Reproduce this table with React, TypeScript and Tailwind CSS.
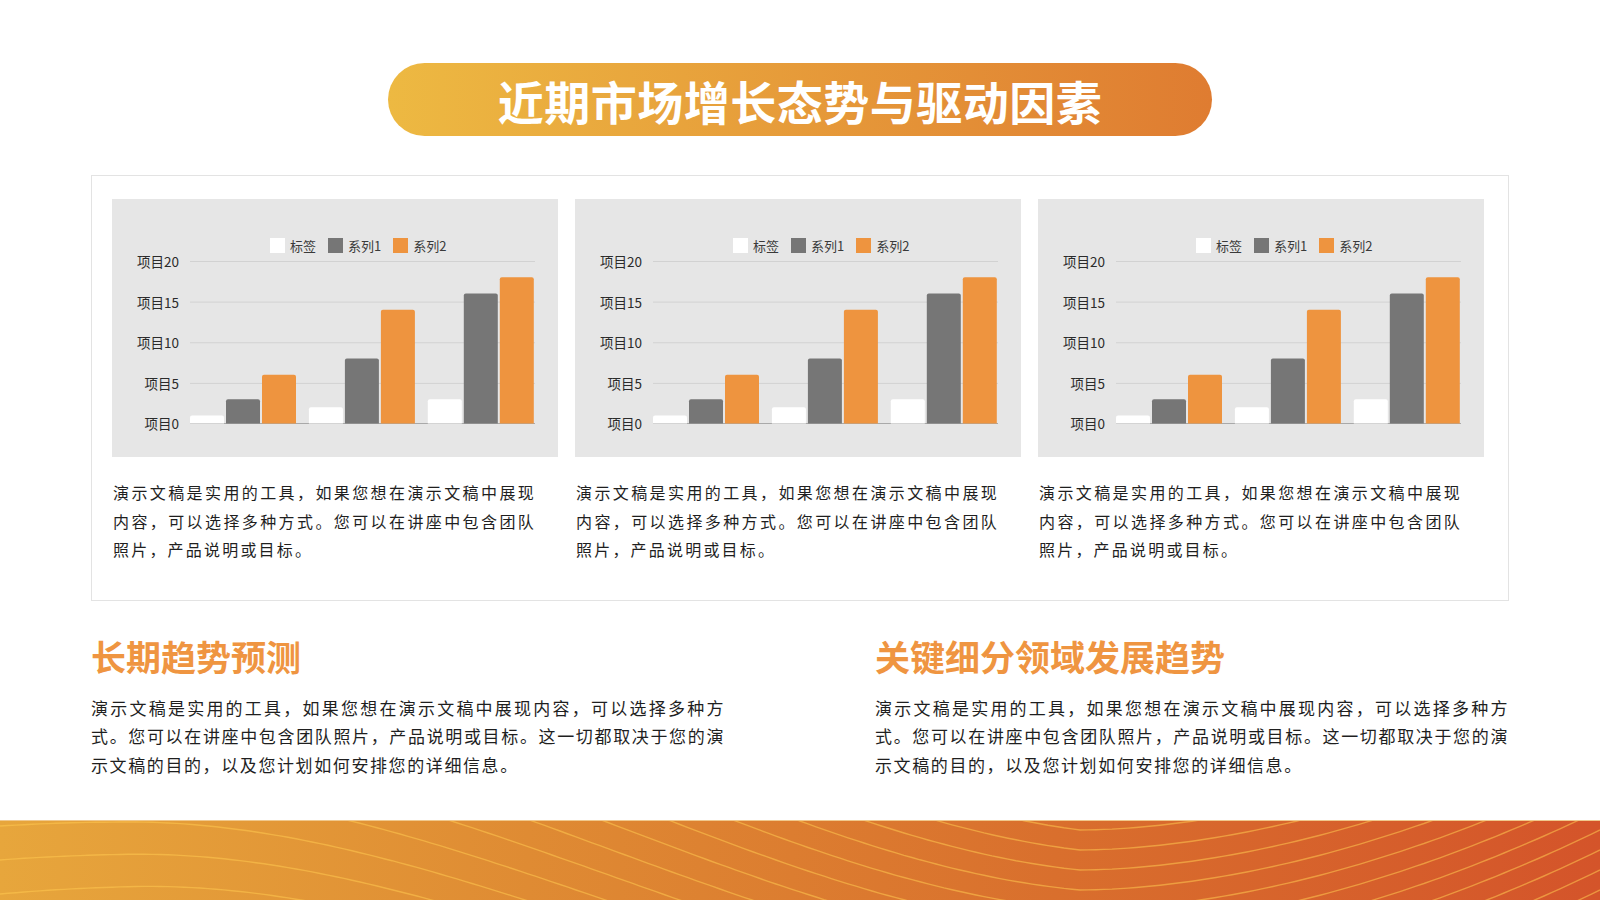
const groups = [
  { white: 1, gray: 3, orange: 6 },
  { white: 2, gray: 8, orange: 14 },
  { white: 3, gray: 16, orange: 18 },
];

const UNIT = 162.5 / 20;

function bar(x: number, w: number, v: number) {
  const base = 162.5;
  const h = v * UNIT;
  const r = 2;
  const top = base - h;
  return `M${x} ${base} V${top + r} Q${x} ${top} ${x + r} ${top} H${x + w - r} Q${x + w} ${top} ${x + w} ${top + r} V${base} Z`;
}

function Chart() {
  return (
    <div className="w-[446px] h-[258px] bg-[#e6e6e6] flex flex-col pt-[39px]">
      <div className="flex items-center h-[15px] pl-[158px] gap-[12px] text-[13px] leading-none text-[#3a3a3a]">
        <span className="flex items-center gap-[5px]">
          <span className="w-[15px] h-[15px] bg-white" />
          标签
        </span>
        <span className="flex items-center gap-[5px]">
          <span className="w-[15px] h-[15px] bg-[#767676]" />
          系列1
        </span>
        <span className="flex items-center gap-[5px]">
          <span className="w-[15px] h-[15px] bg-[#ee943f]" />
          系列2
        </span>
      </div>
      <div className="flex pl-[24px]">
        <div className="w-[43px] h-[178px] flex flex-col justify-between items-end text-[13.5px] leading-[16px] text-[#2b2b2b]">
          <span>项目20</span>
          <span>项目15</span>
          <span>项目10</span>
          <span>项目5</span>
          <span>项目0</span>
        </div>
        <svg className="ml-[11px] mt-[8px] overflow-visible" width="345" height="163" viewBox="0 0 345 163">
          {[0, 1, 2, 3].map((i) => (
            <line key={i} x1="0" x2="345" y1={0.5 + i * 40.625} y2={0.5 + i * 40.625} stroke="#d2d2d2" strokeWidth="1" />
          ))}
          <line x1="0" x2="345" y1="162.5" y2="162.5" stroke="#a9a9a9" strokeWidth="1" />
          {groups.map((g, i) => {
            const x0 = i * 118.9;
            return (
              <g key={i}>
                <path d={bar(x0, 34, g.white)} fill="#ffffff" />
                <path d={bar(x0 + 36, 34, g.gray)} fill="#767676" />
                <path d={bar(x0 + 72, 34, g.orange)} fill="#ee943f" />
              </g>
            );
          })}
        </svg>
      </div>
    </div>
  );
}

function ChartCard() {
  return (
    <div className="flex flex-col">
      <Chart />
      <p className="mt-[21px] w-[424px] pl-[1px] text-justify text-[16px] leading-[28.5px] tracking-[2.2px] text-[#1f1f1f]">
        演示文稿是实用的工具，如果您想在演示文稿中展现内容，可以选择多种方式。您可以在讲座中包含团队照片，产品说明或目标。
      </p>
    </div>
  );
}

function wavePaths() {
  const out: string[] = [];
  for (let k = -14; k <= 3; k++) {
    let d = "";
    for (let x = 0; x <= 1600; x += 8) {
      let g: number;
      if (x < 130) {
        g = -4 + 4 * ((130 - x) / 130) ** 2;
      } else {
        const t = Math.min((x - 130) / 950, 1);
        g = -4 + 208 * t * t * (3 - 2 * t);
      }
      if (x > 1080) g -= 140 * ((x - 1080) / 520) ** 1.8;
      const s = 34 - (14 * Math.min(x, 1080)) / 1080;
      const y = 5 + g + k * s;
      d += (x === 0 ? "M" : "L") + x + " " + y.toFixed(1) + " ";
    }
    out.push(d);
  }
  return out;
}

function WaveBand() {
  const paths = wavePaths();
  return (
    <div className="mt-auto h-[80px] border-t border-[#f0c88c] bg-[linear-gradient(90deg,#e7a63c_0%,#df8b33_33%,#d96f2d_66%,#d4542a_100%)]">
      <svg className="block w-full h-full" viewBox="0 0 1600 79" preserveAspectRatio="none">
        {paths.map((d, i) => (
          <path key={i} d={d} fill="none" stroke="#ffc850" strokeOpacity="0.55" strokeWidth="1.4" />
        ))}
      </svg>
    </div>
  );
}

export default function App() {
  return (
    <div className="w-[1600px] h-[900px] bg-white flex flex-col font-['Noto_Sans_CJK_SC','Noto_Sans',sans-serif] overflow-hidden">
      <div className="mx-auto mt-[63px] w-[824px] h-[73px] rounded-full bg-[linear-gradient(90deg,#edb942,#df7c31)] flex items-center justify-center">
        <h1 className="text-white text-[46px] font-bold leading-none tracking-[0.5px]">近期市场增长态势与驱动因素</h1>
      </div>

      <section className="mx-auto mt-[39px] w-[1418px] border border-[#e3e3e3] pt-[23px] pl-[20px] pb-[36px] flex gap-[17px]">
        <ChartCard />
        <ChartCard />
        <ChartCard />
      </section>

      <section className="mx-auto mt-[34px] w-[1418px] flex justify-between">
        <div className="w-[634px]">
          <h2 className="text-[35px] font-bold leading-[41px] text-[#ef9541]">长期趋势预测</h2>
          <p className="mt-[18px] text-justify text-[17px] leading-[28.5px] tracking-[1.6px] text-[#1f1f1f]">
            演示文稿是实用的工具，如果您想在演示文稿中展现内容，可以选择多种方式。您可以在讲座中包含团队照片，产品说明或目标。这一切都取决于您的演示文稿的目的，以及您计划如何安排您的详细信息。
          </p>
        </div>
        <div className="w-[634px]">
          <h2 className="text-[35px] font-bold leading-[41px] text-[#ef9541]">关键细分领域发展趋势</h2>
          <p className="mt-[18px] text-justify text-[17px] leading-[28.5px] tracking-[1.6px] text-[#1f1f1f]">
            演示文稿是实用的工具，如果您想在演示文稿中展现内容，可以选择多种方式。您可以在讲座中包含团队照片，产品说明或目标。这一切都取决于您的演示文稿的目的，以及您计划如何安排您的详细信息。
          </p>
        </div>
      </section>

      <WaveBand />
    </div>
  );
}
